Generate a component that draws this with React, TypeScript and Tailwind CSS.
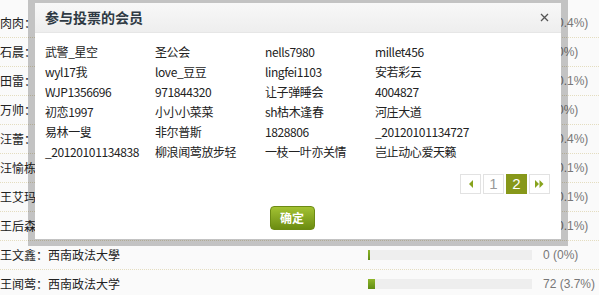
import React from 'react';

const rows = [
  { name: '肉肉', school: '西南政法大学', count: '8 (0.4%)', pct: 0.4 },
  { name: '石晨', school: '西南政法大学', count: '0 (0%)', pct: 0 },
  { name: '田雷', school: '西南政法大学', count: '2 (0.1%)', pct: 0.1 },
  { name: '万帅', school: '西南政法大学', count: '0 (0%)', pct: 0 },
  { name: '汪蕾', school: '西南政法大学', count: '8 (0.4%)', pct: 0.4 },
  { name: '汪愉栋', school: '西南政法大学', count: '2 (0.1%)', pct: 0.1 },
  { name: '王艾玛', school: '西南政法大学', count: '2 (0.1%)', pct: 0.1 },
  { name: '王后森', school: '西南政法大学', count: '2 (0.1%)', pct: 0.1 },
  { name: '王文鑫', school: '西南政法大學', count: '0 (0%)', pct: 0 },
  { name: '王闻莺', school: '西南政法大学', count: '72 (3.7%)', pct: 3.7 },
];

const members = [
  '武警_星空', '圣公会', 'nells7980', 'millet456',
  'wyl17我', 'love_豆豆', 'lingfei1103', '安若彩云',
  'WJP1356696', '971844320', '让子弹睡会', '4004827',
  '初恋1997', '小小小菜菜', 'sh枯木逢春', '河庄大道',
  '易林一叟', '非尔普斯', '1828806', '_20120101134727',
  '_20120101134838', '柳浪闻莺放步轻', '一枝一叶亦关情', '岂止动心爱天籁',
];

const cjk = { fontFamily: '"Noto Sans CJK SC", "Liberation Sans", sans-serif' };

const VoteRow: React.FC<{ r: (typeof rows)[number] }> = ({ r }) => (
  <div className="flex h-[29px] items-center border-b border-dotted border-[#e4ddc0] text-[12px] text-[#222]">
    <div className="w-[368px] whitespace-nowrap">
      {r.name}：{r.school}
    </div>
    <div className="h-[10px] w-[164px] bg-[#eeeeee]">
      <div
        className="h-full bg-gradient-to-b from-[#8fb62a] to-[#5f8c12]"
        style={{ width: Math.max(2, Math.round(r.pct * 2)) }}
      />
    </div>
    <div className="ml-[11px] whitespace-nowrap text-[#777]" style={{ fontFamily: '"Liberation Sans", Arial, sans-serif' }}>
      {r.count}
    </div>
  </div>
);

const PageBtn: React.FC<{ children: React.ReactNode; active?: boolean }> = ({ children, active }) => (
  <div
    className={`flex h-[20px] w-[21px] items-center justify-center border text-[15px] font-light ${
      active ? 'border-[#87981a] bg-[#87981a] text-white' : 'border-[#e2e2e2] bg-white text-[#999]'
    }`}
    style={{ fontFamily: '"Liberation Sans", Arial, sans-serif' }}
  >
    {children}
  </div>
);

const App: React.FC = () => {
  return (
    <div className="relative h-[295px] w-[599px] overflow-hidden bg-[#fafafa]" style={cjk}>
      <div className="pt-[9px]">
        {rows.map((r) => (
          <VoteRow key={r.name} r={r} />
        ))}
      </div>

      {/* member dialog */}
      <div className="absolute left-[28px] top-[-4px] w-[540px] border-[7px] border-[rgba(0,0,0,0.22)]">
        <div className="bg-white">
          <div className="flex h-[30px] items-center justify-between border-b border-[#e6e6e6] bg-gradient-to-b from-[#f8f8f8] to-[#eeeeee] pl-[10px] pr-[12px]">
            <span className="text-[14px] font-bold text-[#2f3a44]">参与投票的会员</span>
            <svg width="9" height="9" viewBox="0 0 9 9" className="text-[#555]">
              <path d="M1 1 L8 8 M8 1 L1 8" stroke="currentColor" strokeWidth="1.3" />
            </svg>
          </div>

          <div className="grid grid-cols-[110px_110px_110px_110px] pl-[10px] pt-[9px] text-[12px] tracking-[-0.4px] text-[#222]">
            {members.map((m) => (
              <div key={m} className="flex h-[20px] items-center whitespace-nowrap">
                {m}
              </div>
            ))}
          </div>

          <div className="mt-[12px] flex justify-end gap-[2px] pr-[11px]">
            <PageBtn>
              <svg width="6" height="8" viewBox="0 0 6 8">
                <path d="M5 0 L1 4 L5 8 Z" fill="#87a31c" />
              </svg>
            </PageBtn>
            <PageBtn>1</PageBtn>
            <PageBtn active>2</PageBtn>
            <PageBtn>
              <svg width="9" height="8" viewBox="0 0 9 8">
                <path d="M0 0 L4 4 L0 8 Z M4.5 0 L8.5 4 L4.5 8 Z" fill="#87a31c" />
              </svg>
            </PageBtn>
          </div>

          <div className="flex justify-center pb-[9px] pr-[12px] pt-[12px]">
            <button className="flex h-[24px] w-[45px] items-center justify-center rounded-[4px] border border-[#6c8a14] bg-gradient-to-b from-[#a3c232] to-[#6b8c10] text-[12px] font-bold text-white">
              确定
            </button>
          </div>
        </div>
      </div>
    </div>
  );
};

export default App;
